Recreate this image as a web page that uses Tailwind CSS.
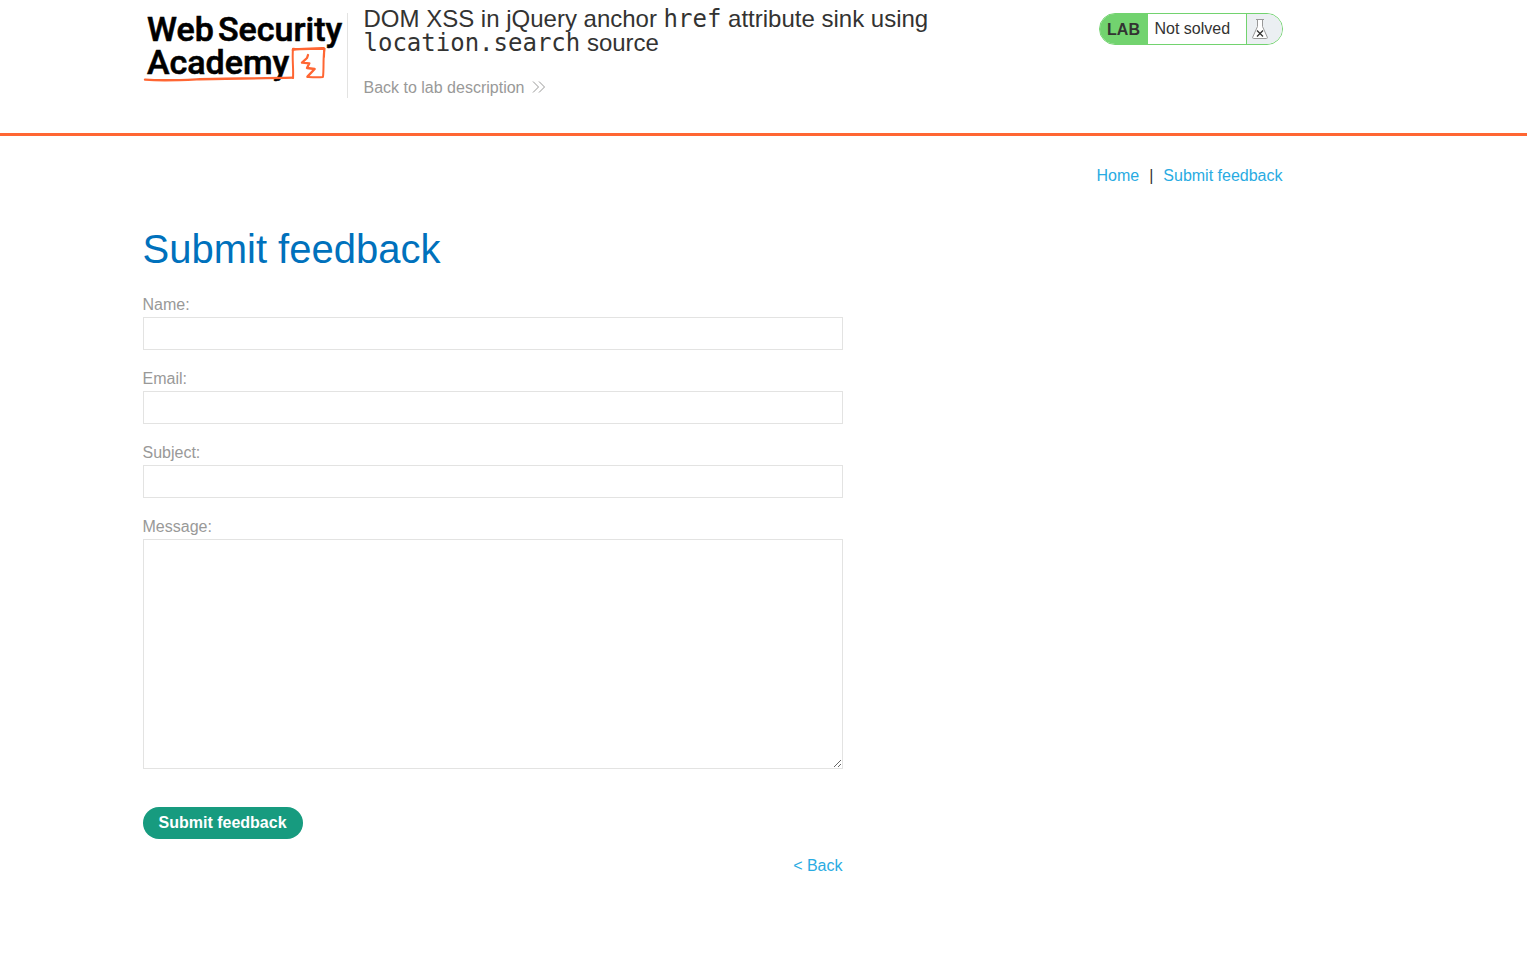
<!DOCTYPE html>
<html lang="en">
<head>
<meta charset="utf-8">
<meta name="viewport" content="width=device-width, initial-scale=1">
<title>DOM XSS in jQuery anchor href attribute sink using location.search source</title>
<script src="https://cdn.jsdelivr.net/npm/@tailwindcss/browser@4"></script>
</head>
<body class="bg-white font-['Liberation_Sans',Arial,sans-serif] text-base text-[#333332]">
<header class="border-b-3 border-[#ff6633]">
  <div class="mx-auto flex min-h-[133px] max-w-[1242px] items-start pr-[102px]">
    <a href="#" aria-label="Web Security Academy" class="mt-[13px] mr-4 block shrink-0 border-r border-[#e3e3e2]">
      <svg class="block h-[85px] w-[204px]" viewBox="3 8 204 85" fill="none">
        <g fill="#000" stroke="#000" stroke-width=".6" font-family="Roboto,sans-serif" font-weight="500" font-size="34">
          <text x="7" y="36">Web</text>
          <text x="78" y="36">Security</text>
          <text x="7" y="69">Academy</text>
        </g>
        <g transform="scale(.33333)" stroke="#ff6633" stroke-linejoin="round" stroke-linecap="round">
          <path stroke-width="7" d="M15 224 C60 227 110 226 170 223 S350 221 459 218"/>
          <path stroke-width="6" d="M459 219 C461 190 456 165 459 131 C490 134 520 128 551 129 L553 133 C549 160 552 190 549 216 C535 218 520 217 502 216"/>
          <path stroke-width="6" d="M458 135 C490 130 530 134 554 131 M553 131 L552 155"/>
          <path stroke-width="7" d="M504 150 L501 159 L486 173 L508 175 L501 189 L524 192 L503 214"/>
        </g>
      </svg>
    </a>
    <div class="min-w-0 flex-1 pt-[7px]">
      <h2 class="text-2xl leading-6">DOM XSS in jQuery anchor <code class="font-['DejaVu_Sans_Mono',monospace]">href</code> attribute sink using <code class="font-['DejaVu_Sans_Mono',monospace]">location.search</code> source</h2>
      <a href="#" class="mt-[25px] inline-flex items-center gap-2 leading-4 text-[#999998]">Back to lab description
        <svg class="h-[14px] w-[14px]" viewBox="0 0 14 14" fill="none" stroke="#999998"><path d="M1 .5 6.500 6 1 11.500M7 .5 12.500 6 7 11.500"/></svg>
      </a>
    </div>
    <div class="mt-[13px] flex h-8 w-[184px] shrink-0 overflow-hidden rounded-2xl border border-[#72d36f] bg-white">
      <span class="flex w-12 items-center justify-center bg-[#72d36f] pt-px font-bold">LAB</span>
      <p class="flex flex-1 items-center border-r border-[#72d36f] pl-[7px]">Not solved</p>
      <span class="flex w-[35px] items-center bg-[#ebeff2] pl-[5px]">
        <svg class="h-5 w-4" viewBox="0 0 16 20" fill="#fff" stroke="#999998"><path d="M5.500 .5V7.500L.7 18.200Q.4 19.500 1.500 19.500H14.500Q15.600 19.500 15.300 18.200L10.500 7.500V.5"/><path d="M4 .5H12"/><path stroke="#333332" stroke-width="1.300" d="M5 11.500 11 17.500M11 11.500 5 17.500"/></svg>
      </span>
    </div>
  </div>
</header>
<main class="mx-auto max-w-[1242px] pt-[30px] pr-[102px]">
  <nav class="flex justify-end gap-[10px] leading-5">
    <a href="#" class="text-[#29abe2]">Home</a><span>|</span><a href="#" class="text-[#29abe2]">Submit feedback</a>
  </nav>
  <div class="max-w-[700px]">
    <h1 class="mt-10 text-[40px] leading-[46px] text-[#0071bc]">Submit feedback</h1>
    <form class="mt-[23px] flex flex-col text-[#999998]">
      <label for="name" class="leading-5">Name:</label>
      <input id="name" type="text" class="mt-[2px] mb-[19px] h-[33px] border border-[#e3e3e2] px-2 text-[#333332]">
      <label for="email" class="leading-5">Email:</label>
      <input id="email" type="email" class="mt-[2px] mb-[19px] h-[33px] border border-[#e3e3e2] px-2 text-[#333332]">
      <label for="subject" class="leading-5">Subject:</label>
      <input id="subject" type="text" class="mt-[2px] mb-[19px] h-[33px] border border-[#e3e3e2] px-2 text-[#333332]">
      <label for="message" class="leading-5">Message:</label>
      <textarea id="message" class="mt-[2px] h-[230px] resize border border-[#e3e3e2] px-2 text-[#333332]"></textarea>
      <button type="submit" class="mt-[38px] h-8 self-start rounded-2xl bg-[#179b7f] px-4 font-bold text-white">Submit feedback</button>
      <a href="#" class="mt-[17px] self-end leading-5 text-[#29abe2]">&lt; Back</a>
    </form>
  </div>
</main>
</body>
</html>
